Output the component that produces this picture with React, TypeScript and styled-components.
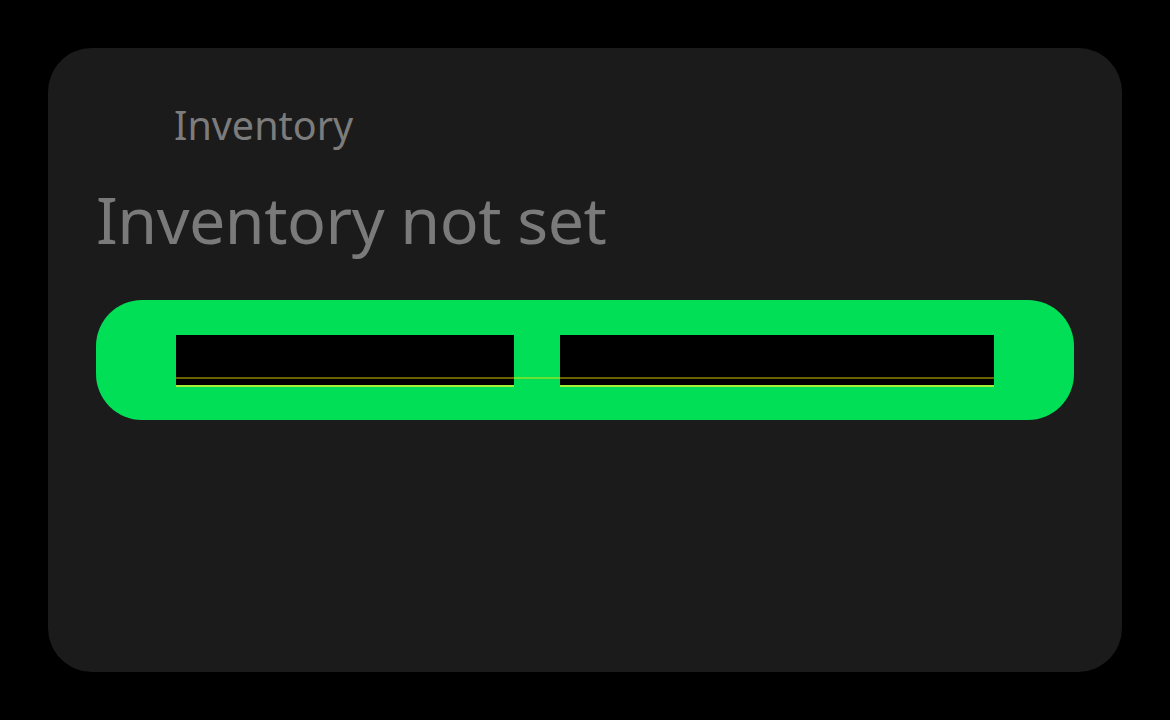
import styled, { createGlobalStyle } from "styled-components";

const GlobalStyle = createGlobalStyle`
  html, body {
    margin: 0;
    background: #000;
  }
  body {
    font-family: "Noto Sans", "Open Sans", sans-serif;
  }
`;

const Page = styled.div`
  padding: 48px;
`;

const Card = styled.div`
  height: 624px;
  box-sizing: border-box;
  background: #1b1b1b;
  border-radius: 44px;
  padding: 44px 48px;
  display: flex;
  flex-direction: column;
`;

const Label = styled.div`
  font-size: 39.5px;
  line-height: 66px;
  color: #7c7c7c;
  padding-left: 78px;
`;

const Status = styled.div`
  font-size: 64.5px;
  line-height: 90px;
  color: #7a7a7a;
  margin-top: 16px;
  letter-spacing: -0.5px;
`;

const Bar = styled.div`
  margin-top: 36px;
  height: 120px;
  box-sizing: border-box;
  background: #00df56;
  border-radius: 46px;
  padding: 35px 80px;
`;

const Fields = styled.div`
  position: relative;
  display: flex;
  gap: 46px;
  height: 52px;

  &::after {
    content: "";
    position: absolute;
    left: 0;
    right: 0;
    top: 42px;
    height: 2px;
    background: rgba(255, 230, 0, 0.42);
  }
`;

const Field = styled.div<{ $grow: number }>`
  flex: ${(p) => p.$grow};
  height: 50px;
  background: #000;
  border-bottom: 2px solid #a4ef3a;
`;

export default function App() {
  return (
    <>
      <GlobalStyle />
      <Page>
        <Card>
          <Label>Inventory</Label>
          <Status>Inventory not set</Status>
          <Bar>
            <Fields>
              <Field $grow={338} />
              <Field $grow={434} />
            </Fields>
          </Bar>
        </Card>
      </Page>
    </>
  );
}
